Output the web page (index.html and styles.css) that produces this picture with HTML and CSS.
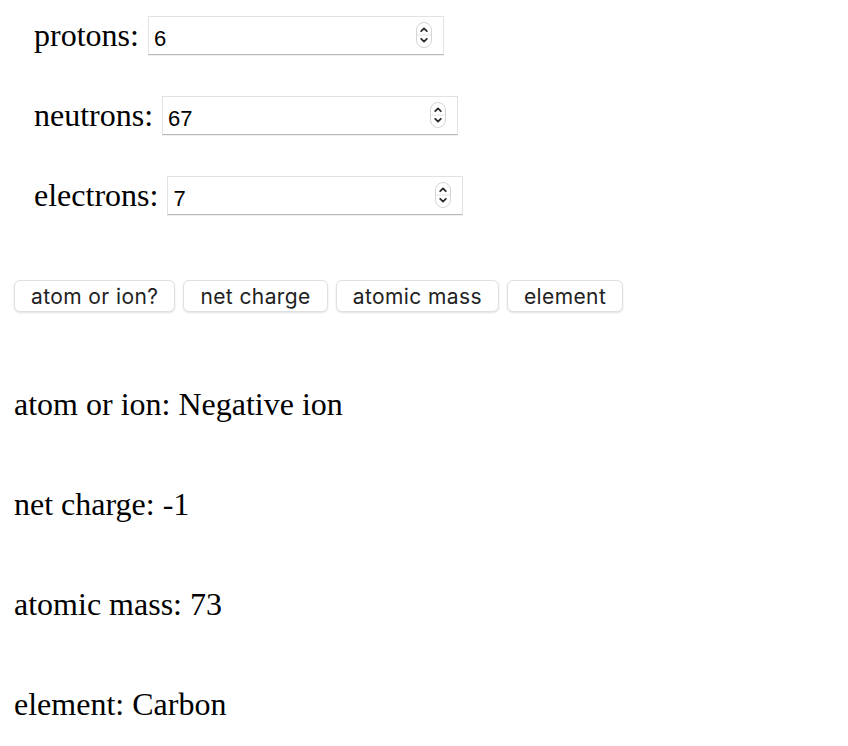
FILE: index.html
```html
<!DOCTYPE html>
<html>
<head>
<meta charset="utf-8">
<link rel="stylesheet" href="styles.css">
</head>
<body>
<div class="page">
  <div class="fields">
    <div class="row">
      <label class="lbl">protons:</label>
      <span class="num"><input class="inp" type="text" value="6"><svg class="spin" viewBox="0 0 16 26" width="16" height="26"><rect x="0.5" y="0.5" width="15" height="25" rx="7.5" fill="#fff" stroke="#d4d4d4"/><line x1="1" y1="13" x2="15" y2="13" stroke="#e4e4e4"/><path d="M5.2 9.2 L8 6.4 L10.8 9.2" fill="none" stroke="#2a2a2a" stroke-width="1.8" stroke-linecap="round" stroke-linejoin="round"/><path d="M5.2 16.8 L8 19.6 L10.8 16.8" fill="none" stroke="#2a2a2a" stroke-width="1.8" stroke-linecap="round" stroke-linejoin="round"/></svg></span>
    </div>
    <div class="row">
      <label class="lbl">neutrons:</label>
      <span class="num"><input class="inp" type="text" value="67"><svg class="spin" viewBox="0 0 16 26" width="16" height="26"><rect x="0.5" y="0.5" width="15" height="25" rx="7.5" fill="#fff" stroke="#d4d4d4"/><line x1="1" y1="13" x2="15" y2="13" stroke="#e4e4e4"/><path d="M5.2 9.2 L8 6.4 L10.8 9.2" fill="none" stroke="#2a2a2a" stroke-width="1.8" stroke-linecap="round" stroke-linejoin="round"/><path d="M5.2 16.8 L8 19.6 L10.8 16.8" fill="none" stroke="#2a2a2a" stroke-width="1.8" stroke-linecap="round" stroke-linejoin="round"/></svg></span>
    </div>
    <div class="row">
      <label class="lbl">electrons:</label>
      <span class="num"><input class="inp" type="text" value="7"><svg class="spin" viewBox="0 0 16 26" width="16" height="26"><rect x="0.5" y="0.5" width="15" height="25" rx="7.5" fill="#fff" stroke="#d4d4d4"/><line x1="1" y1="13" x2="15" y2="13" stroke="#e4e4e4"/><path d="M5.2 9.2 L8 6.4 L10.8 9.2" fill="none" stroke="#2a2a2a" stroke-width="1.8" stroke-linecap="round" stroke-linejoin="round"/><path d="M5.2 16.8 L8 19.6 L10.8 16.8" fill="none" stroke="#2a2a2a" stroke-width="1.8" stroke-linecap="round" stroke-linejoin="round"/></svg></span>
    </div>
  </div>
  <div class="buttons">
    <button class="btn">atom or ion?</button>
    <button class="btn">net charge</button>
    <button class="btn">atomic mass</button>
    <button class="btn">element</button>
  </div>
  <div class="results">
    <div class="res">atom or ion: Negative ion</div>
    <div class="res">net charge: -1</div>
    <div class="res">atomic mass: 73</div>
    <div class="res">element: Carbon</div>
  </div>
</div>
</body>
</html>
```

FILE: styles.css
```css
html, body {
  margin: 0;
  padding: 0;
  background: #fff;
}
.page {
  padding: 16px 14px 0 14px;
  font-family: "Liberation Serif", "Times New Roman", serif;
  color: #000;
}
.fields {
  display: flex;
  flex-direction: column;
  gap: 41px;
  padding-left: 20px;
}
.row {
  display: flex;
  align-items: baseline;
  gap: 9px;
}
.lbl {
  font-size: 32px;
  line-height: 37px;
}
.num {
  position: relative;
  display: inline-block;
}
.inp {
  box-sizing: border-box;
  width: 296px;
  height: 39px;
  margin: 0;
  padding: 6px 30px 0 5px;
  font-family: "Liberation Sans", Arial, sans-serif;
  font-size: 22px;
  color: #000;
  background: #fff;
  border: 1px solid #e2e2e2;
  border-bottom-color: #b9b9b9;
  box-shadow: 0 1px 0 rgba(0,0,0,0.06);
  border-radius: 0;
  outline: none;
}
.spin {
  position: absolute;
  right: 12px;
  top: 6px;
}
.buttons {
  display: flex;
  gap: 8px;
  margin-top: 65px;
}
.btn {
  box-sizing: border-box;
  height: 32px;
  margin: 0;
  padding: 0 16px;
  font-family: "Inter", "Liberation Sans", sans-serif;
  font-size: 21px;
  letter-spacing: 0.4px;
  color: #222;
  background: #fff;
  border: 1px solid #e0e0e0;
  border-radius: 6px;
  box-shadow: 0 1px 2px rgba(0,0,0,0.12);
}
.results {
  display: flex;
  flex-direction: column;
  gap: 63px;
  margin-top: 74px;
}
.res {
  font-size: 32px;
  line-height: 37px;
}
```
